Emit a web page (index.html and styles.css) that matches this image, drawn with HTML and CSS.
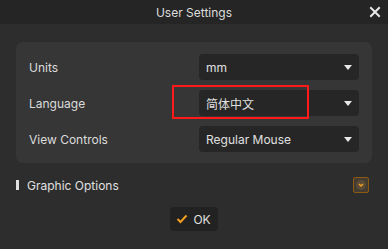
FILE: index.html
```html
<!DOCTYPE html>
<html lang="en">
<head>
  <meta charset="UTF-8" />
  <meta name="viewport" content="width=device-width, initial-scale=1.0" />
  <title>User Settings</title>
  <link rel="stylesheet" href="styles.css">
</head>
<body>

  <div class="dialog">
    <div class="title-bar">
      <span class="title">User Settings</span>
      <button class="close-btn" aria-label="Close">
        <svg width="12" height="12" viewBox="0 0 12 12">
          <path d="M2 2 L10 10 M10 2 L2 10" stroke="#e8e8e8" stroke-width="2" stroke-linecap="square" />
        </svg>
      </button>
    </div>

    <div class="content">
      <div class="panel">
        <div class="row">
          <label>Units</label>
          <div class="select">
            <span>mm</span>
            <span class="arrow"></span>
          </div>
        </div>
        <div class="row">
          <label>Language</label>
          <div class="select">
            <span class="cjk">简体中文</span>
            <span class="arrow"></span>
            <div class="highlight"></div>
          </div>
        </div>
        <div class="row">
          <label>View Controls</label>
          <div class="select">
            <span>Regular Mouse</span>
            <span class="arrow"></span>
          </div>
        </div>
      </div>

      <div class="section">
        <div class="section-title">
          <span class="bar"></span>
          <span>Graphic Options</span>
        </div>
        <button class="expand-btn" aria-label="Expand">
          <svg width="10" height="10" viewBox="0 0 10 10">
            <circle cx="5" cy="5" r="5" fill="#5a4c36" />
            <path d="M3 4 L5 6 L7 4" stroke="#f0a020" stroke-width="1.5" fill="none" />
          </svg>
        </button>
      </div>

      <div class="footer">
        <button class="ok-btn">
          <svg width="12" height="10" viewBox="0 0 12 10">
            <path d="M1.5 5 L4.5 8 L10.5 1.5" stroke="#f0a020" stroke-width="2" fill="none" />
          </svg>
          <span>OK</span>
        </button>
      </div>
    </div>
  </div>

</body>
</html>
```

FILE: styles.css
```css
* {
  box-sizing: border-box;
}

body {
  margin: 0;
  padding: 0;
  background: #2d2d2d;
  font-family: Inter, "Noto Sans", sans-serif;
  font-size: 12px;
  color: #e0e0e0;
}

.dialog {
  width: 388px;
  height: 249px;
  display: flex;
  flex-direction: column;
}

.title-bar {
  height: 24px;
  background: #252525;
  display: flex;
  align-items: center;
  justify-content: center;
  position: relative;
}

.title {
  color: #dcdcdc;
}

.close-btn {
  position: absolute;
  right: 7px;
  top: 6px;
  width: 12px;
  height: 12px;
  padding: 0;
  border: none;
  background: none;
  display: flex;
}

.content {
  padding: 18px 16px 0 16px;
}

.panel {
  background: #363636;
  border-radius: 7px;
  padding: 12px 13px 11px 13px;
  display: flex;
  flex-direction: column;
  gap: 10px;
}

.row {
  display: flex;
  align-items: center;
  justify-content: space-between;
  height: 26px;
}

.row label {
  color: #dcdcdc;
}

.select {
  width: 160px;
  height: 26px;
  background: #262626;
  border-radius: 4px;
  display: flex;
  align-items: center;
  justify-content: space-between;
  padding: 0 7px;
  color: #e0e0e0;
  position: relative;
}

.cjk {
  font-family: "Noto Sans CJK SC", sans-serif;
  font-size: 12px;
}

.arrow {
  width: 0;
  height: 0;
  border-left: 4px solid transparent;
  border-right: 4px solid transparent;
  border-top: 5px solid #e8e8e8;
}

.highlight {
  position: absolute;
  left: -27px;
  top: -5px;
  width: 137px;
  height: 34px;
  border: 2px solid #ff1a1a;
}

.section {
  margin-top: 14px;
  display: flex;
  align-items: center;
  justify-content: space-between;
  padding-right: 3px;
}

.section-title {
  display: flex;
  align-items: center;
  gap: 8px;
}

.bar {
  width: 3px;
  height: 10px;
  background: #e0e0e0;
}

.expand-btn {
  width: 16px;
  height: 16px;
  padding: 0;
  border: 1px solid #8a5a12;
  border-radius: 2px;
  background: #443c30;
  display: flex;
  align-items: center;
  justify-content: center;
}

.footer {
  margin-top: 14px;
  display: flex;
  justify-content: center;
}

.ok-btn {
  height: 24px;
  width: 48px;
  border: none;
  border-radius: 4px;
  background: #222222;
  color: #e0e0e0;
  font-family: Inter, "Noto Sans", sans-serif;
  font-size: 12px;
  display: flex;
  align-items: center;
  justify-content: center;
  gap: 5px;
  padding: 0;
  margin-left: -1px;
}
```
